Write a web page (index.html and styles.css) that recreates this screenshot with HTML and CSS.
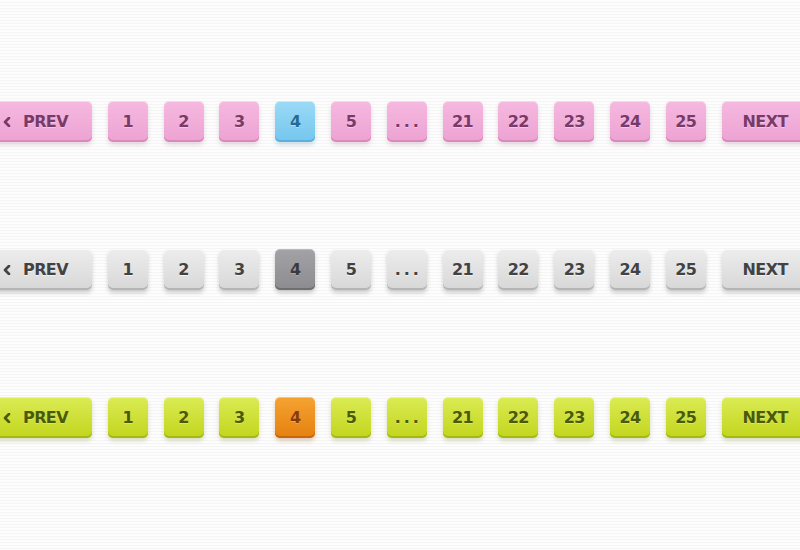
FILE: index.html
```html
<!DOCTYPE html>
<html lang="en">
<head>
  <meta charset="UTF-8">
  <meta name="viewport" content="width=device-width, initial-scale=1.0">
  <title>Pagination Buttons</title>
  <link rel="stylesheet" href="styles.css">
</head>
<body>
  <div class="sets">
    <nav class="pager pink">
      <a class="page wide" href="#"><svg class="arrow" viewBox="0 0 8 10"><polyline points="6,1 2,5 6,9"/></svg>PREV</a>
      <a class="page" href="#">1</a>
      <a class="page" href="#">2</a>
      <a class="page" href="#">3</a>
      <a class="page current" href="#">4</a>
      <a class="page" href="#">5</a>
      <span class="page dots">...</span>
      <a class="page" href="#">21</a>
      <a class="page" href="#">22</a>
      <a class="page" href="#">23</a>
      <a class="page" href="#">24</a>
      <a class="page" href="#">25</a>
      <a class="page wide next" href="#">NEXT<svg class="arrow" viewBox="0 0 8 10"><polyline points="2,1 6,5 2,9"/></svg></a>
    </nav>

    <nav class="pager gray">
      <a class="page wide" href="#"><svg class="arrow" viewBox="0 0 8 10"><polyline points="6,1 2,5 6,9"/></svg>PREV</a>
      <a class="page" href="#">1</a>
      <a class="page" href="#">2</a>
      <a class="page" href="#">3</a>
      <a class="page current" href="#">4</a>
      <a class="page" href="#">5</a>
      <span class="page dots">...</span>
      <a class="page" href="#">21</a>
      <a class="page" href="#">22</a>
      <a class="page" href="#">23</a>
      <a class="page" href="#">24</a>
      <a class="page" href="#">25</a>
      <a class="page wide next" href="#">NEXT<svg class="arrow" viewBox="0 0 8 10"><polyline points="2,1 6,5 2,9"/></svg></a>
    </nav>

    <nav class="pager green">
      <a class="page wide" href="#"><svg class="arrow" viewBox="0 0 8 10"><polyline points="6,1 2,5 6,9"/></svg>PREV</a>
      <a class="page" href="#">1</a>
      <a class="page" href="#">2</a>
      <a class="page" href="#">3</a>
      <a class="page current" href="#">4</a>
      <a class="page" href="#">5</a>
      <span class="page dots">...</span>
      <a class="page" href="#">21</a>
      <a class="page" href="#">22</a>
      <a class="page" href="#">23</a>
      <a class="page" href="#">24</a>
      <a class="page" href="#">25</a>
      <a class="page wide next" href="#">NEXT<svg class="arrow" viewBox="0 0 8 10"><polyline points="2,1 6,5 2,9"/></svg></a>
    </nav>
  </div>
</body>
</html>
```

FILE: styles.css
```css
html, body {
  margin: 0;
  padding: 0;
  height: 100%;
  overflow: hidden;
}
body {
  font-family: "DejaVu Sans", Verdana, sans-serif;
  background-color: #fdfdfd;
  background-image: repeating-linear-gradient(180deg, #fdfdfd 0, #fdfdfd 2px, #f5f5f5 2px, #f5f5f5 3px);
}
.sets {
  display: flex;
  flex-direction: column;
  gap: 107px;
  padding-top: 101px;
}
.pager {
  display: flex;
  gap: 15.8px;
  margin-left: -17px;
  white-space: nowrap;
}
.page {
  flex: none;
  box-sizing: border-box;
  width: 40px;
  height: 41px;
  display: flex;
  align-items: center;
  justify-content: center;
  padding-bottom: 0;
  border-radius: 5px;
  font-size: 16px;
  font-weight: bold;
  text-decoration: none;
  letter-spacing: -0.6px;
}
.page.wide {
  width: 109px;
  justify-content: flex-start;
  padding-left: 20px;
  gap: 12px;
}
.page.next {
  padding-left: 21px;
  gap: 14px;
}
.page.dots {
  letter-spacing: 3px;
  padding-left: 3px;
}
.arrow {
  flex: none;
  width: 8px;
  height: 10px;
  fill: none;
  stroke: currentColor;
  stroke-width: 2.6;
  stroke-linecap: round;
  stroke-linejoin: round;
}

/* pink set */
.pink .page {
  color: #7a3a69;
  background: linear-gradient(#f5b9e0, #eda2d2);
  box-shadow: inset 0 1px 0 rgba(255, 255, 255, 0.45), inset 0 -2px 0 #d88abc, 0 3px 4px rgba(150, 90, 130, 0.22);
  text-shadow: 0 1px 0 rgba(255, 255, 255, 0.35);
}
.pink .current {
  color: #286a92;
  background: linear-gradient(#9bdaf6, #74c6ee);
  box-shadow: inset 0 1px 0 rgba(255, 255, 255, 0.45), inset 0 -2px 0 #5bb0dc, 0 3px 4px rgba(60, 120, 160, 0.22);
}

/* gray set */
.gray .page {
  color: #424242;
  background: linear-gradient(#ededed, #d7d7d7);
  box-shadow: inset 0 1px 0 rgba(255, 255, 255, 0.7), inset 0 -2px 0 #b5b5b5, 0 3px 4px rgba(0, 0, 0, 0.18);
  text-shadow: 0 1px 0 rgba(255, 255, 255, 0.6);
}
.gray .current {
  color: #3a3a3c;
  background: linear-gradient(#a3a3a7, #8b8b90);
  box-shadow: inset 0 1px 0 rgba(255, 255, 255, 0.25), inset 0 -2px 0 #6e6e73, 0 3px 4px rgba(0, 0, 0, 0.2);
  text-shadow: 0 1px 0 rgba(255, 255, 255, 0.2);
}

/* green set */
.green .page {
  color: #4b5a08;
  background: linear-gradient(#dbeb55, #c2d51c);
  box-shadow: inset 0 1px 0 rgba(255, 255, 255, 0.45), inset 0 -2px 0 #a6b812, 0 3px 4px rgba(110, 130, 20, 0.25);
  text-shadow: 0 1px 0 rgba(255, 255, 255, 0.3);
}
.green .current {
  color: #8a3c08;
  background: linear-gradient(#f5a332, #e5800f);
  box-shadow: inset 0 1px 0 rgba(255, 255, 255, 0.35), inset 0 -2px 0 #c8660a, 0 3px 4px rgba(150, 80, 10, 0.28);
  text-shadow: 0 1px 0 rgba(255, 255, 255, 0.2);
}
```
